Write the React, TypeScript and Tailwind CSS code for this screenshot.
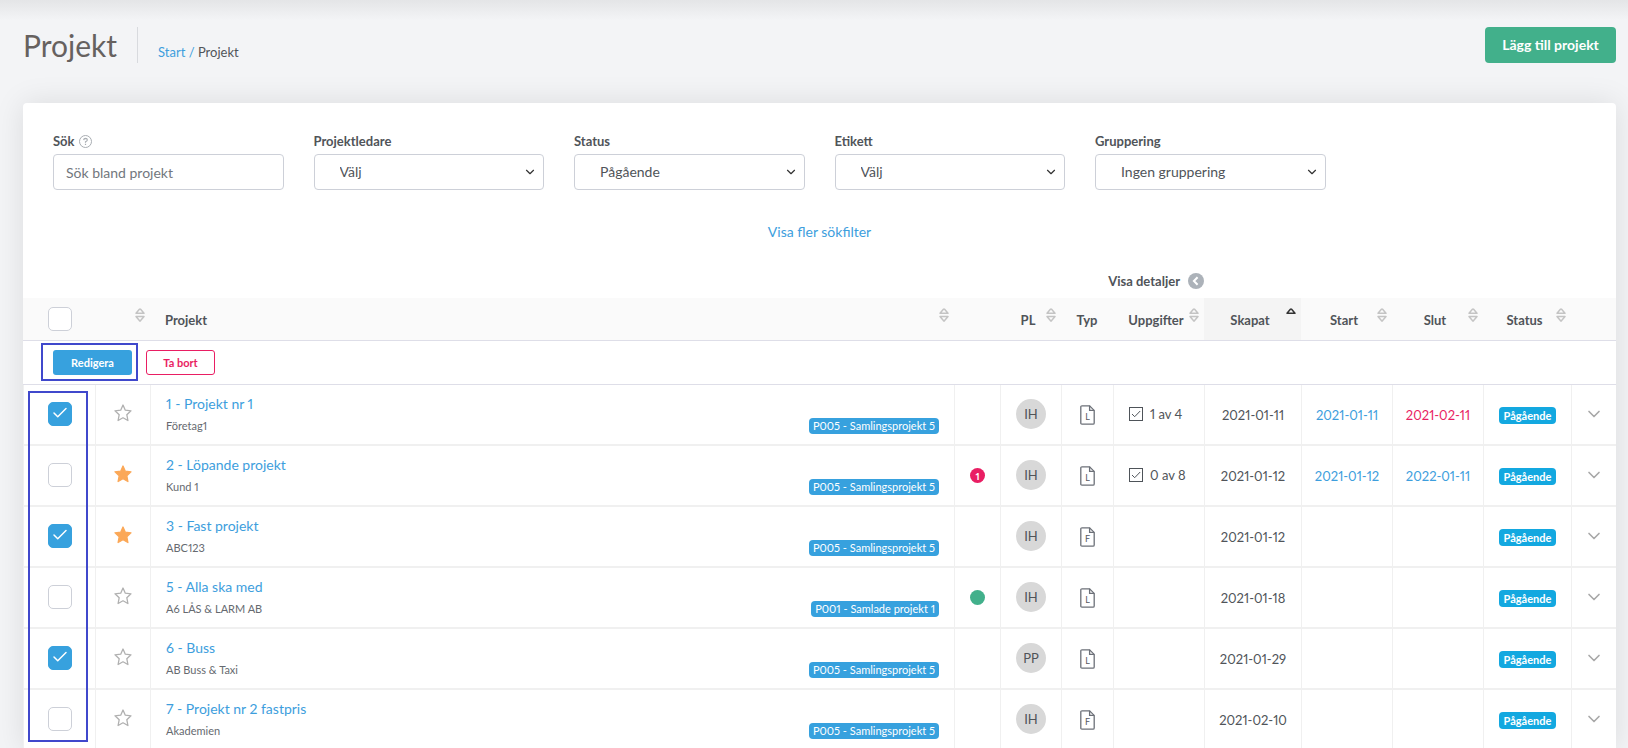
import { useState } from "react";
import { Check, ChevronDown } from "lucide-react";

type Project = {
  nr: number;
  name: string;
  customer: string;
  label: string;
  leader: string;
  kind: "L" | "F";
  created: string;
  start?: string;
  end?: string;
  late?: boolean;
  tasks?: string;
  favorite?: boolean;
  selected?: boolean;
  alert?: string;
  ok?: boolean;
};

const projects: Project[] = [
  { nr: 1, name: "Projekt nr 1", customer: "Företag1", label: "P005 - Samlingsprojekt 5", leader: "IH", kind: "L", tasks: "1 av 4", created: "2021-01-11", start: "2021-01-11", end: "2021-02-11", late: true, selected: true },
  { nr: 2, name: "Löpande projekt", customer: "Kund 1", label: "P005 - Samlingsprojekt 5", leader: "IH", kind: "L", tasks: "0 av 8", created: "2021-01-12", start: "2021-01-12", end: "2022-01-11", favorite: true, alert: "1" },
  { nr: 3, name: "Fast projekt", customer: "ABC123", label: "P005 - Samlingsprojekt 5", leader: "IH", kind: "F", created: "2021-01-12", favorite: true, selected: true },
  { nr: 5, name: "Alla ska med", customer: "A6 LÅS & LARM AB", label: "P001 - Samlade projekt 1", leader: "IH", kind: "L", created: "2021-01-18", ok: true },
  { nr: 6, name: "Buss", customer: "AB Buss & Taxi", label: "P005 - Samlingsprojekt 5", leader: "PP", kind: "L", created: "2021-01-29", selected: true },
  { nr: 7, name: "Projekt nr 2 fastpris", customer: "Akademien", label: "P005 - Samlingsprojekt 5", leader: "IH", kind: "F", created: "2021-02-10" },
];

const filters = [
  { id: "leader", label: "Projektledare", value: "Välj" },
  { id: "status", label: "Status", value: "Pågående" },
  { id: "tag", label: "Etikett", value: "Välj" },
  { id: "group", label: "Gruppering", value: "Ingen gruppering" },
];

const SortIcon = ({ active = false }: { active?: boolean }) => (
  <svg
    viewBox="0 0 10 14"
    className={`absolute right-[5px] top-[10px] h-[14px] w-[10px] ${active ? "text-[#333]" : "text-[#c4c4c4]"}`}
    fill="none"
    stroke="currentColor"
    strokeWidth="1.5"
    strokeLinejoin="round"
  >
    <path d="M1 5.2 4.4 1.2Q5 .6 5.6 1.2L9 5.2Z" />
    {!active && <path d="M1 8.6 4.4 12.6Q5 13.2 5.6 12.6L9 8.6Z" />}
  </svg>
);

const StarIcon = ({ filled }: { filled?: boolean }) => (
  <svg
    viewBox="0 0 18 18"
    className="size-[18px]"
    fill={filled ? "#fba858" : "none"}
    stroke={filled ? "#fba858" : "#b0b0b0"}
    strokeWidth="1.3"
    strokeLinejoin="round"
  >
    <path d="M9 1 11.3 6.2 17 6.8 12.8 10.7 13.9 16.5 9 13.8 4.1 16.5 5.2 10.7 1 6.8 6.7 6.2Z" />
  </svg>
);

const FileIcon = ({ kind }: { kind: string }) => (
  <span className="relative inline-flex h-[20px] w-[15px] items-center justify-center">
    <svg viewBox="0 0 15 20" className="absolute inset-0" fill="none" stroke="#6c7078" strokeWidth="1.3">
      <path d="M2 .8H9.6L14.2 5.4V18Q14.2 19.2 13 19.2H2Q.8 19.2 .8 18V2Q.8 .8 2 .8Z" />
      <path d="M9.6 .8V5.4H14.2" />
    </svg>
    <span className="relative pt-1 text-[9px] leading-none text-[#55595f]">{kind}</span>
  </span>
);

const TaskIcon = () => (
  <svg viewBox="0 0 14 14" className="size-[14px]" fill="none" stroke="#4e5359">
    <rect x=".5" y=".5" width="13" height="13" />
    <path d="M3 7 5.7 9.7 11.2 4" />
  </svg>
);

const CheckBox = ({ label, checked = false }: { label: string; checked?: boolean }) => (
  <span className="relative inline-flex size-6">
    <input
      type="checkbox"
      aria-label={label}
      defaultChecked={checked}
      className="peer size-6 appearance-none rounded-[5px] border border-[#cdd0d8] bg-white checked:border-[#37a1de] checked:bg-[#37a1de]"
    />
    <Check className="pointer-events-none absolute left-[3px] top-[2px] hidden size-[18px] text-white peer-checked:block" strokeWidth={2} />
  </span>
);

const columns = [
  { title: "PL", sort: true },
  { title: "Typ", sort: false },
  { title: "Uppgifter", sort: true },
  { title: "Skapat", sort: true, active: true },
  { title: "Start", sort: true },
  { title: "Slut", sort: true },
  { title: "Status", sort: true },
];

const cell = "border-b-2 border-l border-[#f0f0f0] p-0 text-center";

const ProjectRow = ({ project }: { project: Project }) => {
  const [favorite, setFavorite] = useState(project.favorite);

  return (
    <tr className="h-[61px]">
      <td className={cell}>
        <div className="flex pb-0.5 pl-6">
          <CheckBox label={`Välj ${project.name}`} checked={project.selected} />
        </div>
      </td>
      <td className={cell}>
        <button type="button" aria-label="Favorit" onClick={() => setFavorite(!favorite)} className="mx-auto block pb-[3px]">
          <StarIcon filled={favorite} />
        </button>
      </td>
      <td className="border-b-2 border-l border-[#f0f0f0] px-[15px] pb-0.5 pt-0">
        <div className="flex items-end justify-between">
          <div>
            <a href="#" className="block text-[14px] leading-5 text-[#3d9edd]">
              {project.nr} - {project.name}
            </a>
            <div className="mt-1 text-[11px] leading-4 text-[#666a70]">{project.customer}</div>
          </div>
          <span className="rounded-[4px] bg-[#37a1de] px-1 text-[11px] leading-4 text-white">{project.label}</span>
        </div>
      </td>
      <td className={cell}>
        {project.alert && (
          <span className="mx-auto flex size-[15px] items-center justify-center rounded-full bg-[#e91e63] text-[10px] font-bold text-white">
            {project.alert}
          </span>
        )}
        {project.ok && <span className="mx-auto block size-[15px] rounded-full bg-[#42b08b]" />}
      </td>
      <td className={`${cell} pb-px`}>
        <span className="mx-auto flex size-[30px] items-center justify-center rounded-full bg-[#d8d8d8] text-[13px]">
          {project.leader}
        </span>
      </td>
      <td className={cell}>
        <div className="flex justify-center">
          <FileIcon kind={project.kind} />
        </div>
      </td>
      <td className={cell}>
        {project.tasks && (
          <span className="flex items-center gap-[7px] pb-0.5 pl-[15px] text-[13px]">
            <TaskIcon />
            {project.tasks}
          </span>
        )}
      </td>
      <td className={`${cell} text-[13px]`}>{project.created}</td>
      <td className={`${cell} text-[13px] text-[#3d9edd]`}>{project.start}</td>
      <td className={`${cell} text-[13px] ${project.late ? "text-[#e91e63]" : "text-[#3d9edd]"}`}>{project.end}</td>
      <td className={cell}>
        <span className="mx-auto mt-px block w-[57px] rounded-[4px] bg-[#13a8e0] text-[11px] font-bold leading-[17px] text-white">
          Pågående
        </span>
      </td>
      <td className={cell}>
        <button type="button" aria-label="Visa mer" className="mx-auto block pb-0.5">
          <ChevronDown className="size-5 text-[#a8a8a8]" strokeWidth={2} />
        </button>
      </td>
    </tr>
  );
};

const App = () => (
  <div className="relative h-screen overflow-hidden bg-[#f3f4f6] pl-[23px] pr-3 pt-[27px] font-['Lato',sans-serif] text-[14px] leading-5 proportional-nums text-[#505459]">
    {/* Shadow from the top bar */}
    <div className="absolute inset-x-0 top-0 h-5 bg-gradient-to-b from-[#e4e5e7] to-[#f3f4f6]" />

    <header className="relative flex h-9 items-center justify-between">
      <div className="flex items-baseline">
        <h1 className="border-r border-[#d8dade] pr-5 text-[30px] leading-9 text-[#66615f]">Projekt</h1>
        <nav className="pl-5 text-[13px]">
          <a href="#" className="text-[#3d9edd]">Start /</a> Projekt
        </nav>
      </div>
      <button type="button" className="h-9 w-[131px] rounded-[4px] bg-[#42b08b] font-bold text-white">
        Lägg till projekt
      </button>
    </header>

    <main className="relative mt-10 rounded-[4px] bg-white shadow-[0_0_30px_rgba(0,0,0,0.1)]">
      <form className="grid grid-cols-6 gap-[30px] px-[30px] pt-[29px]">
        <div>
          <label htmlFor="search" className="flex h-[22px] items-center gap-1 pb-1 text-[13px] font-bold">
            Sök
            <svg viewBox="0 0 13 13" className="size-[13px]" fill="none" stroke="#a9adb2">
              <circle cx="6.5" cy="6.5" r="6" />
              <path d="M4.7 5.1Q4.8 3.4 6.5 3.4 8.3 3.5 8.3 5 8.2 6 6.5 6.8V7.8M6.5 8.8V10" strokeWidth="1.2" />
            </svg>
          </label>
          <input
            id="search"
            type="text"
            placeholder="Sök bland projekt"
            className="block h-9 w-full rounded-[4px] border border-[#cdd0d8] px-3 placeholder:text-[#72777d]"
          />
        </div>
        {filters.map((filter) => (
          <div key={filter.id}>
            <label htmlFor={filter.id} className="flex h-[22px] items-center pb-1 text-[13px] font-bold">
              {filter.label}
            </label>
            <div className="relative">
              <select
                id={filter.id}
                className="block h-9 w-full appearance-none rounded-[4px] border border-[#cdd0d8] bg-white pl-[25px] pr-8"
              >
                <option>{filter.value}</option>
              </select>
              <ChevronDown className="pointer-events-none absolute right-[7px] top-[11px] size-[14px] text-[#333]" strokeWidth={2} />
            </div>
          </div>
        ))}
      </form>

      <div className="mt-8 text-center">
        <a href="#" className="text-[#3d9edd]">Visa fler sökfilter</a>
      </div>

      <div className="mt-[29px] flex justify-end pb-[7px] pr-[412px]">
        <button type="button" className="flex items-center gap-2 text-[13px] font-bold leading-5">
          Visa detaljer
          <svg viewBox="0 0 16 16" className="size-4">
            <circle cx="8" cy="8" r="8" fill="#acb2b9" />
            <path d="M9.6 4.2 5.9 8 9.6 11.8" fill="none" stroke="#fff" strokeWidth="2" />
          </svg>
        </button>
      </div>

      <div className="relative">
        <table className="w-full table-fixed border-separate border-spacing-0">
          <colgroup>
            <col className="w-[72px]" />
            <col className="w-[55px]" />
            <col />
            <col className="w-[46px]" />
            <col className="w-[61px]" />
            <col className="w-[52px]" />
            <col className="w-[91px]" />
            <col className="w-[97px]" />
            <col className="w-[91px]" />
            <col className="w-[91px]" />
            <col className="w-[88px]" />
            <col className="w-[45px]" />
          </colgroup>
          <thead className="bg-[#fafafa] text-[13px]">
            <tr className="h-[43px]">
              <th className="border-b border-[#dedee8] p-0">
                <div className="flex pl-[25px]">
                  <CheckBox label="Välj alla" />
                </div>
              </th>
              <th className="relative border-b border-[#dedee8] p-0">
                <SortIcon />
              </th>
              <th className="relative border-b border-[#dedee8] p-0 pl-[15px] pt-px text-left">
                Projekt
                <SortIcon />
              </th>
              <th className="border-b border-[#dedee8] p-0" />
              {columns.map((column) => (
                <th
                  key={column.title}
                  className={`relative border-b border-[#dedee8] p-0 pt-px ${column.sort ? "pr-[5px]" : ""} ${column.active ? "bg-[#f4f4f4]" : ""}`}
                >
                  {column.title}
                  {column.sort && <SortIcon active={column.active} />}
                </th>
              ))}
              <th className="border-b border-[#dedee8] p-0" />
            </tr>
          </thead>
          <tbody>
            <tr className="h-11">
              <td colSpan={12} className="border-b border-[#dedee8] p-0 pl-[30px]">
                <div className="flex gap-[14px]">
                  <button type="button" className="h-[25px] w-[79px] rounded-[3px] bg-[#37a1de] text-[11px] font-bold text-white">
                    Redigera
                  </button>
                  <button type="button" className="h-[25px] w-[69px] rounded-[3px] border border-[#e91e63] text-[11px] font-bold text-[#e91e63]">
                    Ta bort
                  </button>
                </div>
              </td>
            </tr>
            {projects.map((project) => (
              <ProjectRow key={project.nr} project={project} />
            ))}
          </tbody>
        </table>

        {/* Marker frames */}
        <div className="pointer-events-none absolute left-[18px] top-[45px] h-[38px] w-[97px] border-2 border-[#4048cc]" />
        <div className="pointer-events-none absolute left-[5px] top-[93px] h-[351px] w-[60px] border-2 border-[#4048cc]" />
      </div>
    </main>
  </div>
);

export default App;
